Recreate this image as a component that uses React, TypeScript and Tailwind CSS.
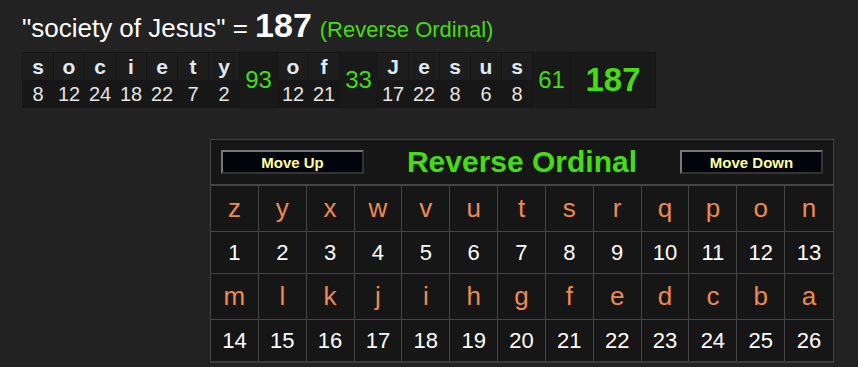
import React from "react"

const words = [
  { letters: ["s", "o", "c", "i", "e", "t", "y"], values: [8, 12, 24, 18, 22, 7, 2], total: 93 },
  { letters: ["o", "f"], values: [12, 21], total: 33 },
  { letters: ["J", "e", "s", "u", "s"], values: [17, 22, 8, 6, 8], total: 61 },
]

const row1 = "zyxwvutsrqpon".split("")
const row2 = "mlkjihgfedcba".split("")

function Breakdown() {
  return (
    <table className="border-separate border-spacing-[1.5px] bg-[#161616]">
      <tbody>
        <tr>
          {words.map((w, wi) => (
            <React.Fragment key={wi}>
              {w.letters.map((l, i) => (
                <td key={i} className="w-[30px] h-[27px] bg-[#1d1d1d] text-center text-[21px] leading-[27px] font-bold text-[#dfeaf5]">
                  {l}
                </td>
              ))}
              <td rowSpan={2} className="w-[37px] bg-[#191919] text-center text-[24px] text-[#44dd11]">
                {w.total}
              </td>
            </React.Fragment>
          ))}
          <td rowSpan={2} className="w-[84px] bg-[#191919] text-center text-[33px] font-bold text-[#44dd11]">
            187
          </td>
        </tr>
        <tr>
          {words.map((w, wi) =>
            w.values.map((v, i) => (
              <td key={wi + "-" + i} className="h-[26px] bg-[#171717] text-center text-[20px] leading-[26px] text-[#e4e4e4]">
                {v}
              </td>
            ))
          )}
        </tr>
      </tbody>
    </table>
  )
}

function MoveButton({ label }: { label: string }) {
  return (
    <button className="w-[143px] h-[24px] bg-[#03030b] border-2 border-t-[#777] border-l-[#777] border-b-[#333] border-r-[#333] text-[15px] leading-none font-bold text-[#ffff99]">
      {label}
    </button>
  )
}

function Chart() {
  return (
    <div className="ml-[210px] mt-[31px] w-[624px] bg-[#161616] border border-[#444] border-b-2 border-b-[#3a3a3a]">
      <div className="flex items-center justify-between h-[46px] px-[10px] border-b-2 border-[#444]">
        <MoveButton label="Move Up" />
        <span className="text-[30px] font-bold text-[#44dd11] leading-none">Reverse Ordinal</span>
        <MoveButton label="Move Down" />
      </div>
      <div className="grid grid-cols-13">
        {row1.map((l, i) => (
          <div key={"a" + i} className={`h-[46px] flex items-center justify-center text-[26px] text-[#ee8a4f] border-b border-[#444] ${i < 12 ? "border-r" : ""}`}>
            {l}
          </div>
        ))}
        {row1.map((_, i) => (
          <div key={"b" + i} className={`h-[42px] flex items-center justify-center text-[22px] text-white border-b border-[#444] ${i < 12 ? "border-r" : ""}`}>
            {i + 1}
          </div>
        ))}
        {row2.map((l, i) => (
          <div key={"c" + i} className={`h-[46px] flex items-center justify-center text-[26px] text-[#ee8a4f] border-b border-[#444] ${i < 12 ? "border-r" : ""}`}>
            {l}
          </div>
        ))}
        {row2.map((_, i) => (
          <div key={"d" + i} className={`h-[41px] flex items-center justify-center text-[22px] text-white border-[#444] ${i < 12 ? "border-r" : ""}`}>
            {i + 14}
          </div>
        ))}
      </div>
    </div>
  )
}

export default function App() {
  return (
    <div className="w-[858px] h-[367px] bg-[#222222] overflow-hidden font-['Liberation_Sans',Arial,sans-serif]">
      <div className="pl-[22px] pt-[8px]">
        <div className="flex items-baseline leading-none">
          <span className="text-[26px] text-white">"society of Jesus" =&nbsp;</span>
          <span className="text-[34px] font-bold text-white">187</span>
          <span className="text-[22px] text-[#44dd11] ml-[8px]">(Reverse Ordinal)</span>
        </div>
        <div className="mt-[10px]">
          <Breakdown />
        </div>
      </div>
      <Chart />
    </div>
  )
}
